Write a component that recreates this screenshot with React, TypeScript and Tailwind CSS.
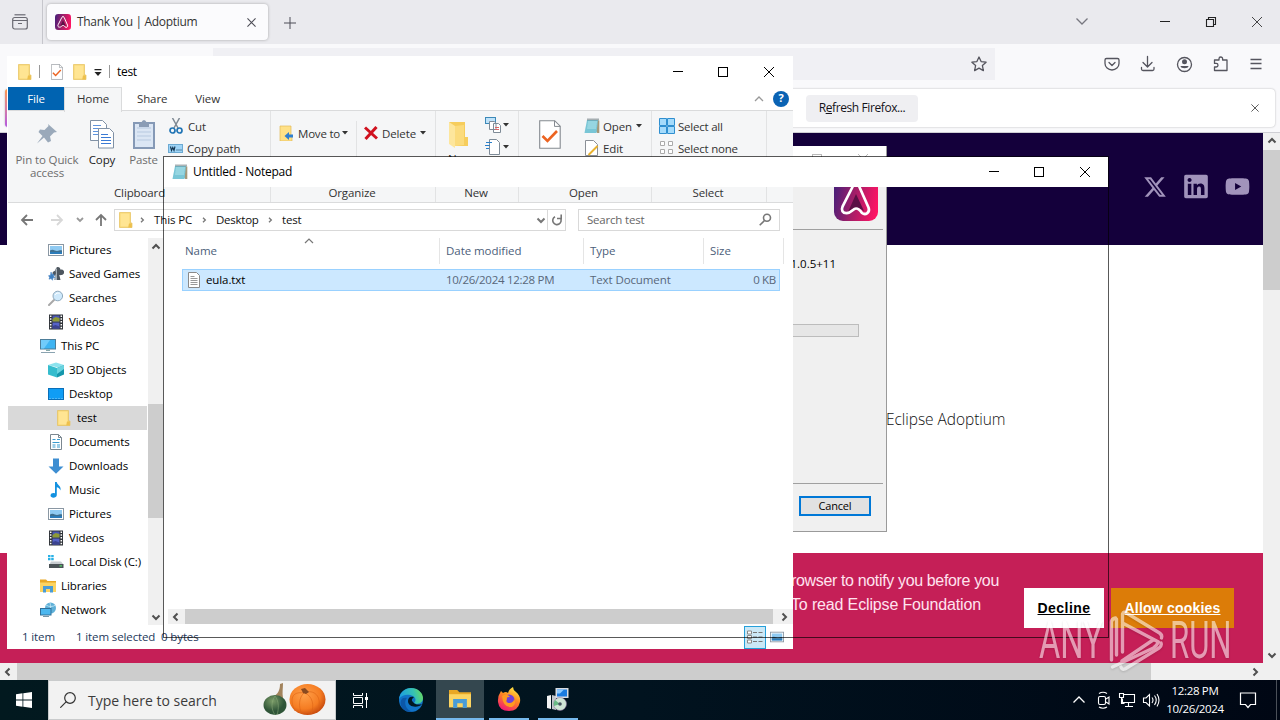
import React from "react";
import { FaLinkedin, FaYoutube } from "react-icons/fa";
import { FaXTwitter } from "react-icons/fa6";

type IconProps = { className?: string };

function FolderIcon({ className = "w-4 h-4" }: IconProps) {
  return (
    <svg viewBox="0 0 16 16" className={className}>
      <path d="M1.500 .5h11v10.500h1.500v4.500h-12.500z" fill="#f8d775" />
      <path d="M2.500 1.500h9v13h-9z" fill="#ffe593" />
      <path d="M11 11.500h2.800v4h-3.600z" fill="#eec04b" />
      <path d="M1.500 .5h11v10.500h1.500v4.500h-12.500z" fill="none" stroke="#e6c15c" strokeWidth=".7" />
    </svg>
  );
}

function PicturesIcon({ className = "w-4 h-4 shrink-0" }: IconProps) {
  return (
    <svg viewBox="0 0 16 16" className={className}>
      <rect x=".5" y="2.500" width="15" height="11" fill="#fff" stroke="#8a97a3" />
      <rect x="2" y="4" width="12" height="8" fill="#8fcaf2" />
      <path d="M2 8.500c3-2 5 .5 7 .5s3-1 5-.5v1.500h-12z" fill="#3f6f8f" />
      <path d="M2 10h12v2h-12z" fill="#2b7bb9" />
    </svg>
  );
}

function GamesIcon() {
  return (
    <svg viewBox="0 0 16 16" className="w-4 h-4 shrink-0">
      <path d="M9.500 1a2.600 2.600 0 0 1 2.800 2.600a2.800 2.800 0 1 1 1 5.400c-1 .3-1.500 0-2 0l1.200 5h-6l1-4.500c-3 1-4.500-3.500-1-4.500c1 0 1.200-4 3-4z" fill="#4d565f" />
      <path d="M9 2c-2 1-1.500 3-1 5l-2 7h3z" fill="#a7b1b9" />
      <path d="M3 6l1 2.500 2-.5-.5 2 1.500 1.500-2 .3-.5 2.500-1.500-1.800-2 .7.600-2-1.100-1.500 2-.5z" fill="#3f7fc0" stroke="#3f7fc0" strokeWidth=".5" />
    </svg>
  );
}

function SearchesIcon() {
  return (
    <svg viewBox="0 0 16 16" className="w-4 h-4 shrink-0">
      <path d="M6 10l-5 5" stroke="#a8a8a8" strokeWidth="2" strokeLinecap="round" />
      <circle cx="9.800" cy="6" r="4.800" fill="#cfe9fb" stroke="#8fa9bd" />
      <path d="M7 5c1-2 3-2.500 4.500-1.500" stroke="#fff" fill="none" />
    </svg>
  );
}

function VideosIcon() {
  return (
    <svg viewBox="0 0 16 16" className="w-4 h-4 shrink-0">
      <rect x="1" y=".5" width="14" height="15" fill="#2f3338" />
      <rect x="4.500" y="1.500" width="7" height="6" fill="#4a57b5" />
      <path d="M4.500 5l3-2 4 1v3.500h-7z" fill="#8e9a35" />
      <rect x="4.500" y="8.500" width="7" height="6" fill="#5662c8" />
      <path d="M4.500 12l3-1 4 1.500v2h-7z" fill="#3b4390" />
      <path d="M2.700 1.500v14M13.300 1.500v14" stroke="#fff" strokeWidth="1.500" strokeDasharray="1.500 1.300" />
    </svg>
  );
}

function PcIcon() {
  return (
    <svg viewBox="0 0 16 16" className="w-4 h-4 shrink-0">
      <rect x=".5" y="1.500" width="15" height="9.500" fill="#3fb4f2" stroke="#4d7d99" />
      <path d="M1 2h9l-6 8.500h-3z" fill="#71cbfa" />
      <path d="M6 11.500h4v1.500h-4z" fill="#8aa" />
      <path d="M1 14.500h14" stroke="#8aa3b0" />
    </svg>
  );
}

function CubeIcon() {
  return (
    <svg viewBox="0 0 16 16" className="w-4 h-4 shrink-0">
      <path d="M0 3l8-2.500 8 2.500-6 2.500z" fill="#8ce3ee" />
      <path d="M0 3l9 3v9.500l-9-3z" fill="#35bccd" />
      <path d="M9 6l7-3v9.500l-7 3z" fill="#1597ac" />
      <path d="M9 6l7-3v4l-7 5z" fill="#69d3df" />
    </svg>
  );
}

function DesktopIcon() {
  return (
    <svg viewBox="0 0 16 16" className="w-4 h-4 shrink-0">
      <rect x=".5" y="2.500" width="15" height="11" fill="#0f9df5" stroke="#0a6fb8" />
      <path d="M1 12.500h14" stroke="#5fbdf5" strokeWidth=".8" strokeDasharray="2 1" />
    </svg>
  );
}

function DocumentsIcon() {
  return (
    <svg viewBox="0 0 16 16" className="w-4 h-4 shrink-0">
      <path d="M2.500 .5h8l3 3v12h-11z" fill="#fff" stroke="#7b8790" />
      <path d="M10.500 .5v3h3" fill="none" stroke="#7b8790" />
      <path d="M4.500 5.500h3M4.500 8.500h7M4.500 11h3M4.500 13h3M9 5.500h3M9 11h3M9 13h3" stroke="#3a9bcf" />
    </svg>
  );
}

function DownloadsIcon() {
  return (
    <svg viewBox="0 0 16 16" className="w-4 h-4 shrink-0">
      <path d="M5 .5h6v8h4.500l-7.500 7.200-7.500-7.200h4.500z" fill="#3d8ed2" />
    </svg>
  );
}

function MusicIcon() {
  return (
    <svg viewBox="0 0 16 16" className="w-4 h-4 shrink-0">
      <path d="M7 0h1.800c.2 3 5 4 3.500 8.500-.3-2-2-3-3.500-3.300v7.800c0 3.500-6.300 3.600-6.300.6 0-2.400 3-3 4.500-2.200z" fill="#1391e0" />
    </svg>
  );
}

function DiskIcon() {
  return (
    <svg viewBox="0 0 16 16" className="w-4 h-4 shrink-0">
      <path d="M0 1h2.500v2.200h-2.500zM3.200 1h2.500v2.200h-2.500zM0 4h2.500v2.200h-2.500zM3.200 4h2.500v2.200h-2.500z" fill="#29b1e6" />
      <path d="M3 7.500h10l2.500 3h-14z" fill="#c8cdd1" />
      <rect x="1" y="10" width="14.500" height="4" fill="#4b5357" />
      <rect x="11.500" y="11.300" width="2.500" height="1.200" fill="#5be06c" />
    </svg>
  );
}

function LibrariesIcon({ className = "w-4 h-4 shrink-0" }: IconProps) {
  return (
    <svg viewBox="0 0 16 16" className={className}>
      <path d="M0 1.500h6l1.500 1.500h8.500v11h-16z" fill="#e9a825" />
      <path d="M0 4.500h16v9.500h-16z" fill="#fcd462" />
      <path d="M3 14.500v-6.500h10v6.500h-3v-3.500h-4v3.500z" fill="#4a9cd6" />
    </svg>
  );
}

function NetworkIcon() {
  return (
    <svg viewBox="0 0 16 16" className="w-4 h-4 shrink-0">
      <circle cx="10.500" cy="6" r="5.500" fill="#5fb0d8" />
      <path d="M6 3c3 2 7 2 9.500 0M8 11c3-3 3-7 2-10" stroke="#d7f0fb" strokeWidth=".7" fill="none" />
      <rect x=".5" y="6.500" width="10.500" height="6.500" fill="#4cb7ef" stroke="#30709a" />
      <path d="M3 14.500h6" stroke="#7897a8" />
    </svg>
  );
}

function NotepadIcon({ className = "w-4 h-4" }: IconProps) {
  return (
    <svg viewBox="0 0 16 16" className={className}>
      <path d="M3 2.500h12.300v12.500h-2z" fill="#a69879" />
      <path d="M3 2h11l-1.500 13h-12z" fill="#79c6d6" />
      <path d="M4 4h9M3.700 6h9M3.400 8h9M3.100 10h9" stroke="#c3edf3" strokeWidth=".8" />
      <path d="M3.500 1.500h11" stroke="#56666b" strokeWidth="2" strokeDasharray="1 1" />
    </svg>
  );
}

function CheckDocIcon({ className }: IconProps) {
  return (
    <svg viewBox="0 0 22 29" className={className}>
      <path d="M.7 .7h15l5.500 5.500v22h-20.500z" fill="#fff" stroke="#858a90" strokeWidth="1.100" />
      <path d="M15.500 .7v5.700h5.700" fill="none" stroke="#858a90" />
      <path d="M3.500 16l5 5 9.500-10" fill="none" stroke="#ec6421" strokeWidth="2.600" />
    </svg>
  );
}

function AdoptiumLogo({ className, id }: IconProps & { id: string }) {
  return (
    <svg viewBox="0 0 44 44" className={className}>
      <defs>
        <linearGradient id={id} x1="0" y1=".4" x2="1" y2=".6">
          <stop offset="0" stopColor="#4d1f78" />
          <stop offset=".45" stopColor="#a31e68" />
          <stop offset="1" stopColor="#ff1464" />
        </linearGradient>
      </defs>
      <rect width="44" height="44" rx="9" fill={`url(#${id})`} />
      <path d="M22 17l8 17-5-3h-5l-6 4z" fill="#5a1045" />
      <path
        d="M19 9q3-5 6 0l9.500 21.500c2 5-3 8-6.500 5.500-2-3-3.500-4.500-6-4.500-3 0-5 5-9.500 4.700-4 0-5.500-3-4-6.500z"
        fill="none"
        stroke="#fff"
        strokeWidth="2.700"
        strokeLinejoin="round"
      />
    </svg>
  );
}

function Caret({ className = "" }: IconProps) {
  return (
    <svg viewBox="0 0 6 4" className={`w-[6px] h-[4px] shrink-0 ${className}`}>
      <path d="M0 0h6l-3 3.500z" fill="#333" />
    </svg>
  );
}

function Chevron({ dir, className = "" }: { dir: "up" | "down" | "left" | "right"; className?: string }) {
  const paths = {
    up: "M2.500 7.500l3.500-3.500 3.500 3.500",
    down: "M2.500 4.500l3.500 3.500 3.500-3.500",
    left: "M7.500 2.500l-3.500 3.500 3.500 3.500",
    right: "M4.500 2.500l3.500 3.500-3.500 3.500",
  };
  return (
    <svg viewBox="0 0 12 12" className={`w-3 h-3 shrink-0 ${className}`}>
      <path d={paths[dir]} fill="none" stroke="currentColor" strokeWidth="2" />
    </svg>
  );
}

function WindowControls({ className = "" }: IconProps) {
  return (
    <svg viewBox="0 0 138 30" className={`w-[138px] h-[30px] ${className}`} fill="none" stroke="currentColor" shapeRendering="crispEdges">
      <path d="M18 14.500h10" />
      <rect x="63.500" y="10.500" width="9" height="9" />
      <path d="M109 10l10 10M119 10l-10 10" shapeRendering="auto" />
    </svg>
  );
}

function BrowserChrome() {
  return (
    <>
      <div className="flex h-[44px] shrink-0 bg-[#eaeaee] text-[#4c4c56]">
        <div className="flex w-[43px] items-center justify-center border-r border-[#c6c6cc]">
          <svg viewBox="0 0 16 16" className="w-4 h-4 -ml-[3px]" fill="none" stroke="#6a6a72" strokeWidth="1.200">
            <path d="M2.500 .8h11" />
            <rect x=".7" y="3.500" width="14.600" height="11.500" rx="2" />
            <path d="M1 6.500h14M6 9.500h4" />
          </svg>
        </div>
        <div className="ml-[4px] mt-[4px] flex h-[36px] w-[221px] items-center rounded bg-[#fbfbfd] shadow-[0_0_3px_rgba(0,0,0,0.3)]">
          <AdoptiumLogo id="fav" className="ml-2 w-4 h-4" />
          <span className="ml-[6px] flex-1 text-[12px] tracking-[-0.330px] text-[#333]">Thank You | Adoptium</span>
          <svg viewBox="0 0 10 10" className="mr-[12px] w-[9px] h-[9px]" stroke="currentColor" strokeWidth="1.200">
            <path d="M.5 .5l9 9M9.500 .5l-9 9" />
          </svg>
        </div>
        <svg viewBox="0 0 12 12" className="ml-[16px] mt-[17px] w-3 h-3" stroke="currentColor">
          <path d="M6 0v12M0 6h12" />
        </svg>
        <svg viewBox="0 0 204 44" className="ml-auto w-[204px] h-[44px]" fill="none" stroke="currentColor" strokeWidth="1.100">
          <path d="M.5 18.500l5.500 5.500 5.500-5.500" stroke="#77777f" strokeWidth="1.300" />
          <path d="M84 21.500h10" stroke="#222" strokeWidth="1" />
          <path d="M130.500 19.500h7v7h-7zM132.500 19v-1.500h7v7h-1.500" stroke="#222" />
          <path d="M176 17l10 10M186 17l-10 10" stroke="#333" strokeWidth=".9" />
        </svg>
      </div>
      <div className="flex h-[44px] shrink-0 bg-[#f9f9fb] text-[#55555e]">
        <div className="ml-[213px] mt-[4px] flex h-[32px] w-[782px] items-center justify-end bg-[#f0f0f4]">
          <svg viewBox="0 0 16 16" className="mr-2 w-4 h-4" fill="none" stroke="currentColor" strokeWidth="1.300" strokeLinejoin="round">
            <path d="M8 1l2.100 4.600 5 .6-3.700 3.400 1 5-4.400-2.500-4.400 2.500 1-5-3.700-3.400 5-.6z" />
          </svg>
        </div>
        <svg viewBox="0 0 176 44" className="ml-auto w-[176px] h-[44px]" fill="none" stroke="currentColor" strokeWidth="1.300" strokeLinecap="round" strokeLinejoin="round">
          <path d="M2.500 14.500h11q1.500 0 1.500 1.500v3.500a7 6.500 0 0 1-14 0v-3.500q0-1.500 1.500-1.500zM5 18.500l3 3 3-3" />
          <path d="M43.500 12.500v10M39 18.500l4.500 4.500 4.500-4.500M37.500 23.500v1.500q0 1.500 1.500 1.500h9.500q1.500 0 1.500-1.500v-1.500" />
          <circle cx="80.500" cy="20.500" r="7" />
          <circle cx="80.500" cy="17.800" r="2.500" fill="currentColor" stroke="none" />
          <path d="M76.500 22h8c0 3-8 3-8 0z" fill="currentColor" stroke="none" />
          <path d="M110.500 17.500v-1.500h4.500v-1.200a1.800 1.800 0 0 1 3.600 0v1.200h4.400v10.500h-12.500v-3.500h1.700a1.800 1.800 0 0 0 0-3.600h-1.700z" />
          <path d="M146.500 15.500h11M146.500 19.500h11M146.500 24.500h11" strokeLinecap="butt" />
        </svg>
      </div>
      <div className="flex h-[45px] shrink-0 border-b border-[#cfcfd4] bg-[#f9f9fb]">
        <div className="ml-[5px] flex h-[38px] w-[1270px] items-center rounded-[4px] bg-white shadow-[0_0_2px_rgba(0,0,0,0.3)] mt-px">
          <div className="h-full w-[3px] rounded-l bg-linear-to-b from-[#ff9640] to-[#b455e0]" />
          <div className="ml-[798px] flex h-[27px] w-[112px] items-center justify-center rounded-[4px] bg-[#efeff2] text-[12px] tracking-[-0.400px] text-[#15141a]">
            <span>R<span className="underline">e</span>fresh Firefox...</span>
          </div>
          <svg viewBox="0 0 10 10" className="ml-auto mr-[16px] w-[8px] h-[8px]" stroke="#333">
            <path d="M.5 .5l9 9M9.500 .5l-9 9" />
          </svg>
        </div>
      </div>
    </>
  );
}

function BrowserPage() {
  return (
    <>
      <div className="flex h-[530px]">
        <div className="flex w-[1263px] flex-col bg-white">
          <div className="flex h-[112px] items-start justify-end bg-[#14003b] text-[#a193bb]">
            <FaXTwitter className="mt-[42px] mr-[17px] w-[24px] h-[24px]" />
            <FaLinkedin className="mt-[40px] mr-[17px] w-[24px] h-[27px]" />
            <FaYoutube className="mt-[41px] mr-[13px] w-[25px] h-[25px]" />
          </div>
          <div className="flex h-[308px] items-start">
            <span className="ml-[886px] mt-[162px] text-[15.500px] font-light leading-6 tracking-[-0.050px] text-[#111]">Eclipse Adoptium</span>
          </div>
          <div className="flex h-[110px] bg-[#c51f57]">
            <p className="ml-[791px] mt-[16px] w-[233px] whitespace-nowrap font-['Liberation_Sans',sans-serif] text-[16px] leading-6 text-[#ffe3ef]">
              <span className="tracking-[-0.350px]">rowser to notify you before you</span>
              <br />
              <span className="tracking-[-0.150px]">To read Eclipse Foundation</span>
            </p>
            <div className="mt-[35px] flex h-[40px] w-[80px] items-center justify-center bg-white font-['Liberation_Sans',sans-serif] text-[14px] font-bold tracking-[0.450px] text-black underline">
              Decline
            </div>
            <div className="ml-[7px] mt-[35px] flex h-[40px] w-[123px] items-center justify-center bg-[#dc7c08] font-['Liberation_Sans',sans-serif] text-[14px] font-bold tracking-[0.200px] text-white underline">
              Allow cookies
            </div>
          </div>
        </div>
        <div className="flex w-[17px] flex-col items-center bg-[#f0f0f0] text-[#505050]">
          <Chevron dir="up" className="mt-[2px] mb-[3px]" />
          <div className="h-[140px] w-full bg-[#cdcdcd]" />
          <Chevron dir="down" className="mt-auto mb-[2px]" />
        </div>
      </div>
      <div className="flex h-[17px] items-center bg-[#f0f0f0] text-[#505050]">
        <Chevron dir="left" className="ml-[2px] mr-[3px]" />
        <div className="h-full w-[1134px] bg-[#cdcdcd]" />
        <Chevron dir="right" className="ml-auto mr-[19px]" />
      </div>
    </>
  );
}

function InstallerWindow() {
  return (
    <div className="absolute left-[390px] top-[146px] flex h-[386px] w-[497px] flex-col border-r border-b border-[#9a9a9a] bg-[#f0f0f0]">
      <div className="flex h-[30px] shrink-0 justify-end bg-white text-[#bbb]">
        <WindowControls className="-mr-px -mt-[2px]" />
      </div>
      <div className="mr-[3px] flex h-[54px] shrink-0 items-start justify-end border-b border-[#a0a0a0]">
        <AdoptiumLogo id="installer" className="mr-[5px] mt-[1px] h-[44px] w-[44px]" />
      </div>
      <span className="mr-[50px] mt-[26px] text-right text-[11.500px] leading-4 text-black">1.0.5+11</span>
      <div className="ml-[20px] mt-[52px] h-[13px] w-[449px] shrink-0 border border-[#bcbcbc] bg-[#e6e6e6]" />
      <div className="mr-[3px] mt-[146px] border-t border-[#a0a0a0]" />
      <div className="mr-[15px] mt-[12px] flex h-[20px] w-[72px] items-center justify-center self-end border-2 border-[#0078d7] bg-[#e1e1e1] text-[11px] tracking-[-0.200px] text-black">
        Cancel
      </div>
    </div>
  );
}

function Ribbon() {
  return (
    <div className="flex h-[93px] shrink-0 border-y border-[#dadbdc] bg-[#f5f6f7] text-[11.500px] leading-[13px] tracking-[-0.120px] text-[#333]">
      <div className="flex w-[263px] flex-col border-r border-[#e2e3e4]">
        <div className="flex h-[74px]">
          <div className="flex w-[78px] flex-col items-center pt-[11px] text-[#6d6d6d]">
            <svg viewBox="0 0 24 24" className="w-6 h-6">
              <path d="M13 2l9 8-3 .5-4 4 1 4.500-3 1.500-4-5-7 6 5.500-7.500-4-4 1.500-2.500 4.500 .5 4-4z" fill="#9aa9ba" />
            </svg>
            <span className="mt-[7px] whitespace-nowrap text-center">Pin to Quick<br />access</span>
          </div>
          <div className="flex w-[32px] flex-col items-center pt-[9px] text-[#222]">
            <svg viewBox="0 0 26 29" className="h-[29px] w-[26px]" fill="#fff" stroke="#8091a5">
              <path d="M1.500 .5h12l4 4v16h-16z" />
              <path d="M4 5.500h8M4 8.500h10M4 11.500h10M4 14.500h10" stroke="#5e93dd" />
              <path d="M9.500 8.500h11l4 4v15.500h-15z" />
              <path d="M12 14.500h7M12 17.500h10M12 20.500h10M12 23.500h10" stroke="#3a7ad4" />
            </svg>
            <span className="mt-[4px]">Copy</span>
          </div>
          <div className="flex w-[51px] flex-col items-center pt-[8px] text-[#6d6d6d]">
            <svg viewBox="0 0 22 30" className="h-[30px] w-[22px]">
              <rect x="1" y="4" width="20" height="25" fill="#dbe6f4" stroke="#8599b6" strokeWidth="2" />
              <path d="M4 9h14M4 13h14M4 17h14M4 21h14" stroke="#b7c9e0" />
              <path d="M6 4h2q3-6 6 0h2v4h-10z" fill="#8a9cb5" />
            </svg>
            <span className="mt-[4px]">Paste</span>
          </div>
          <div className="flex flex-col pt-[4px]">
            <span className="flex h-[22px] items-center gap-[5px]">
              <svg viewBox="0 0 14 16" className="h-4 w-[14px]" fill="none">
                <path d="M3.500 0l5.500 10M10.500 0l-5.500 10" stroke="#7e8993" strokeWidth="1.500" />
                <circle cx="3.500" cy="12.500" r="2.500" stroke="#2175b5" strokeWidth="1.700" />
                <circle cx="10.500" cy="12.500" r="2.500" stroke="#2175b5" strokeWidth="1.700" />
              </svg>
              Cut
            </span>
            <span className="-ml-px flex h-[22px] items-center gap-[4px]">
              <svg viewBox="0 0 15 9" className="h-[9px] w-[15px]">
                <rect x=".5" y=".5" width="14" height="8" fill="#9ed4f7" stroke="#6caad2" />
                <path d="M2.500 2.500l1 4 1.300-3 1.200 3 1-4M8.500 6h1M10.500 6h1M12.500 6h1" fill="none" stroke="#12344f" strokeWidth="1.100" />
              </svg>
              Copy path
            </span>
          </div>
        </div>
        <span className="mt-[1px] ml-[106px]">Clipboard</span>
      </div>
      <div className="flex w-[165px] flex-col items-center border-r border-[#e2e3e4]">
        <div className="flex h-[74px] w-full pl-[8px] pt-[10px]">
          <span className="flex h-[24px] w-[77px] items-center gap-[3px] whitespace-nowrap">
            <svg viewBox="0 0 16 16" className="h-4 w-4 shrink-0">
              <path d="M1 1h11v10h1v5h-12z" fill="#ffe187" stroke="#e2ba57" strokeWidth=".7" />
              <path d="M5.500 11l4.500-4v2.500h4v3h-4v2.500z" fill="#2f7fd0" />
            </svg>
            <span className="-mr-px tracking-[-0.200px]">Move to</span>
            <Caret />
          </span>
          <div className="h-[37px] w-px bg-[#e2e3e4]" />
          <span className="ml-[7px] flex h-[24px] items-center gap-[4px]">
            <svg viewBox="0 0 14 14" className="h-[14px] w-[14px]" stroke="#d0121f" strokeWidth="3">
              <path d="M1 1.500l12 11M12.500 1l-11 12" />
            </svg>
            Delete
            <Caret />
          </span>
        </div>
        <span className="-ml-[2px] mt-[1px]">Organize</span>
      </div>
      <div className="flex w-[83px] flex-col items-center border-r border-[#e2e3e4]">
        <div className="flex h-[74px] w-full pl-[12px] pt-[6px]">
          <div className="flex w-[37px] flex-col">
            <svg viewBox="0 0 22 28" className="mt-[4px] h-[28px] w-[22px]">
              <path d="M1 1h16v15h3v9h-14z" fill="#f6cd5d" />
              <path d="M1 1l6 4v22l-6-4z" fill="#fde69d" />
              <path d="M7 5v20l9-1v-20z" fill="#fbdb7d" />
            </svg>
            <span className="mt-[3px]">New</span>
          </div>
          <div className="flex flex-col gap-[6px]">
            <span className="flex items-center gap-[2px]">
              <svg viewBox="0 0 16 16" className="h-4 w-4" fill="#fff" stroke="#7e8b97">
                <rect x=".5" y=".5" width="10" height="6" fill="#bfe3fa" stroke="#3d89b8" />
                <path d="M4.500 4.500h5l1.500 2v6h-6.500zM8.500 6.500h5l2 2v7h-7z" />
                <path d="M10 10.500h4M10 12.500h4" stroke="#d66" />
              </svg>
              <Caret />
            </span>
            <span className="flex items-center gap-[2px]">
              <svg viewBox="0 0 16 16" className="h-4 w-4" fill="#fff" stroke="#7e8b97">
                <path d="M4.500 .5h7l3 3v12h-10z" />
                <path d="M1 3.500h6M0 6.500h5M1 9.500h3" stroke="#2a7fc9" />
              </svg>
              <Caret />
            </span>
          </div>
        </div>
        <span className="-ml-[2px] mt-[1px]">New</span>
      </div>
      <div className="flex w-[133px] flex-col items-center border-r border-[#e2e3e4]">
        <div className="flex h-[74px] w-full pl-[20px] pt-[4px]">
          <div className="flex w-[45px] flex-col">
            <CheckDocIcon className="mt-[5px] h-[29px] w-[22px]" />
            <span className="-ml-[13px] mt-[5px]">Properties</span>
          </div>
          <div className="flex flex-col">
            <span className="flex h-[22px] items-center gap-[3px]">
              <NotepadIcon className="h-4 w-4" />
              Open
              <Caret className="ml-px" />
            </span>
            <span className="flex h-[22px] items-center gap-[3px]">
              <svg viewBox="0 0 16 16" className="h-4 w-4" fill="#fff" stroke="#8a8f96">
                <path d="M1.500 .5h8l4 4v11h-12z" />
                <path d="M13.500 6l-9 9" stroke="#e9b22f" strokeWidth="2" />
              </svg>
              Edit
            </span>
          </div>
        </div>
        <span className="-ml-[3px] mt-[1px]">Open</span>
      </div>
      <div className="flex w-[115px] flex-col items-center border-r border-[#e2e3e4]">
        <div className="flex h-[74px] w-full flex-col pl-[7px] pt-[4px] tracking-[-0.220px]">
          <span className="flex h-[22px] items-center gap-[3px]">
            <svg viewBox="0 0 16 16" className="h-4 w-4" fill="#a5dbfb" stroke="#2f8fd0">
              <path d="M.5 .5h7v7h-7zM8.500 .5h7v7h-7zM.5 8.500h7v7h-7zM8.500 8.500h7v7h-7z" />
            </svg>
            Select all
          </span>
          <span className="flex h-[22px] items-center gap-[3px]">
            <svg viewBox="0 0 16 16" className="h-4 w-4" fill="#fff" stroke="#aaa">
              <path d="M1.500 1.500h4v4h-4zM9.500 1.500h4v4h-4zM1.500 9.500h4v4h-4zM9.500 9.500h4v4h-4z" />
            </svg>
            Select none
          </span>
        </div>
        <span className="-ml-[2px] mt-[1px]">Select</span>
      </div>
    </div>
  );
}

function AddressRow() {
  return (
    <div className="flex h-[33px] shrink-0 items-center text-[12px] text-[#111]">
      <svg viewBox="0 0 106 33" className="h-[33px] w-[106px]" fill="none" strokeWidth="1.800">
        <path d="M25 17h-11M19 12l-5 5 5 5" stroke="#777" />
        <path d="M43 17h11M49 12l5 5-5 5" stroke="#d8d8d8" />
        <path d="M69 15l3 3 3-3" stroke="#999" />
        <path d="M93 23v-11M88 17l5-5 5 5" stroke="#777" />
      </svg>
      <div className="flex h-[22px] w-[452px] items-center border border-[#d9d9d9]">
        <FolderIcon className="ml-[3px] h-4 w-4" />
        <Chevron dir="right" className="ml-[4px] w-[8px] text-[#777]" />
        <span className="ml-[8px] w-[43px] text-[11.500px] tracking-[-0.100px] whitespace-nowrap">This PC</span>
        <Chevron dir="right" className="ml-[3px] w-[8px] text-[#777]" />
        <span className="ml-[8px] w-[44px] text-[11.500px] tracking-[-0.250px]">Desktop</span>
        <Chevron dir="right" className="ml-[6px] w-[8px] text-[#777]" />
        <span className="ml-[8px] text-[11.500px] tracking-[-0.200px]">test</span>
        <Chevron dir="down" className="ml-auto text-[#777]" />
        <div className="flex h-[20px] w-[18px] items-center justify-center border-l border-[#d9d9d9]">
          <svg viewBox="0 0 12 12" className="h-3 w-3" fill="none" stroke="#777" strokeWidth="1.600">
            <path d="M9.500 4.200a4.200 4.200 0 1 1-5.500-1.500M6 4.500h4.200v-4" />
          </svg>
        </div>
      </div>
      <div className="ml-[12px] flex h-[22px] w-[202px] items-center justify-between border border-[#d9d9d9] pl-[8px] pr-[7px] text-[11.500px] tracking-[-0.200px] text-[#666]">
        Search test
        <svg viewBox="0 0 13 13" className="h-[13px] w-[13px]" fill="none" stroke="#777" strokeWidth="1.600">
          <circle cx="8" cy="4.800" r="3.500" />
          <path d="M5.500 7.500l-4.800 4.800" />
        </svg>
      </div>
    </div>
  );
}

const treeItems = [
  { label: "Pictures", icon: <PicturesIcon />, pad: "pl-[40px]" },
  { label: "Saved Games", icon: <GamesIcon />, pad: "pl-[40px]" },
  { label: "Searches", icon: <SearchesIcon />, pad: "pl-[40px]" },
  { label: "Videos", icon: <VideosIcon />, pad: "pl-[40px]" },
  { label: "This PC", icon: <PcIcon />, pad: "pl-[32px]" },
  { label: "3D Objects", icon: <CubeIcon />, pad: "pl-[40px]" },
  { label: "Desktop", icon: <DesktopIcon />, pad: "pl-[40px]" },
  { label: "test", icon: <FolderIcon className="h-4 w-4" />, pad: "pl-[48px] bg-[#d9d9d9]" },
  { label: "Documents", icon: <DocumentsIcon />, pad: "pl-[40px]" },
  { label: "Downloads", icon: <DownloadsIcon />, pad: "pl-[40px]" },
  { label: "Music", icon: <MusicIcon />, pad: "pl-[40px]" },
  { label: "Pictures", icon: <PicturesIcon />, pad: "pl-[40px]" },
  { label: "Videos", icon: <VideosIcon />, pad: "pl-[40px]" },
  { label: "Local Disk (C:)", icon: <DiskIcon />, pad: "pl-[40px]" },
  { label: "Libraries", icon: <LibrariesIcon />, pad: "pl-[32px]" },
  { label: "Network", icon: <NetworkIcon />, pad: "pl-[32px]" },
];

function ExplorerWindow() {
  return (
    <div className="absolute left-[7px] top-[56px] flex h-[593px] w-[786px] flex-col bg-white pl-px">
      <div className="flex h-[31px] shrink-0 items-center">
        <FolderIcon className="ml-[9px] h-4 w-4" />
        <div className="ml-[6px] h-[13px] w-px bg-[#999]" />
        <CheckDocIcon className="ml-[11px] h-[16px] w-[12px]" />
        <FolderIcon className="ml-[9px] h-4 w-4" />
        <svg viewBox="0 0 8 8" className="ml-[6px] mt-[3px] h-[8px] w-[8px]" fill="#222">
          <path d="M.5 0h7v1.200h-7zM.5 3h7l-3.500 4z" />
        </svg>
        <div className="ml-[7px] h-[13px] w-px bg-[#999]" />
        <span className="ml-[7px] text-[12px] tracking-[-0.300px] text-black">test</span>
        <WindowControls className="ml-auto" />
      </div>
      <div className="flex h-[23px] shrink-0 items-center text-[11.500px] tracking-[-0.120px] text-[#333]">
        <div className="flex h-full w-[56px] items-center justify-center bg-[#0063b1] text-white">File</div>
        <div className="relative z-10 -mb-[2px] flex h-[25px] w-[58px] items-center justify-center border border-b-0 border-[#dadbdc] bg-[#f5f6f7] pb-[3px]">Home</div>
        <span className="ml-[15px]">Share</span>
        <span className="ml-[28px]">View</span>
        <svg viewBox="0 0 10 6" className="ml-auto h-[6px] w-[10px]" fill="none" stroke="#999" strokeWidth="1.300">
          <path d="M1 5l4-4 4 4" />
        </svg>
        <div className="ml-[9px] mr-[4px] flex h-4 w-4 items-center justify-center rounded-full bg-[#0a63b4] text-[11px] font-bold text-white">?</div>
      </div>
      <Ribbon />
      <AddressRow />
      <div className="flex h-[389px] shrink-0">
        <div className="flex w-[140px] flex-col pt-[2px] pr-px">
          {treeItems.map((item, i) => (
            <div key={i} className={`flex h-[24px] shrink-0 items-center gap-[5px] whitespace-nowrap text-[11.500px] tracking-[-0.100px] text-black ${item.pad}`}>
              {item.icon}
              {item.label}
            </div>
          ))}
        </div>
        <div className="mt-[2px] flex w-[15px] flex-col items-center bg-[#f0f0f0] text-[#505050]">
          <Chevron dir="up" className="mt-[3px]" />
          <div className="mt-[151px] h-[114px] w-full bg-[#cdcdcd]" />
          <Chevron dir="down" className="mt-auto mb-[2px]" />
        </div>
        <div className="flex flex-1 flex-col pl-[5px]">
          <svg viewBox="0 0 10 6" className="ml-[136px] mt-[2px] h-[6px] w-[10px] shrink-0" fill="none" stroke="#777" strokeWidth="1.200">
            <path d="M1 5l4-4 4 4" />
          </svg>
          <div className="-mt-[6px] flex h-[26px] shrink-0 items-center text-[11.500px] tracking-[-0.050px] text-[#4c607a]">
            <span className="w-[272px] border-r border-[#e5e5e5] pl-[17px] leading-[26px]">Name</span>
            <span className="w-[144px] border-r border-[#e5e5e5] pl-[6px] leading-[26px]">Date modified</span>
            <span className="w-[120px] border-r border-[#e5e5e5] pl-[6px] leading-[26px]">Type</span>
            <span className="w-[80px] border-r border-[#e5e5e5] pl-[6px] leading-[26px]">Size</span>
          </div>
          <div className="ml-[14px] mt-[5px] flex h-[22px] w-[598px] shrink-0 items-center border border-[#99d1ff] bg-[#cce8ff] text-[11.500px] tracking-[-0.100px] text-[#58677a]">
            <svg viewBox="0 0 12 16" className="ml-[5px] h-4 w-3" fill="#fff" stroke="#8a8a8a">
              <path d="M.5 .5h8l3 3v12h-11z" />
              <path d="M2.500 4.500h4M2.500 6.500h7M2.500 8.500h7M2.500 10.500h7M2.500 12.500h7" stroke="#999" />
            </svg>
            <span className="ml-[6px] w-[240px] text-black">eula.txt</span>
            <span className="w-[144px] tracking-[-0.280px]">10/26/2024 12:28 PM</span>
            <span className="w-[120px]">Text Document</span>
            <span className="ml-auto mr-[3px] tracking-[-0.300px]">0 KB</span>
          </div>
          <div className="mt-auto mb-px flex h-[15px] items-center bg-[#f0f0f0] text-[#505050]">
            <Chevron dir="left" className="ml-[2px] mr-[3px]" />
            <div className="h-full w-[588px] bg-[#cdcdcd]" />
            <Chevron dir="right" className="ml-auto mr-[3px]" />
          </div>
        </div>
      </div>
      <div className="flex h-[24px] shrink-0 items-center text-[11.500px] tracking-[-0.120px] text-[#1e395b]">
        <span className="ml-[14px] w-[54px]">1 item</span>
        <span className="w-[85px] whitespace-nowrap">1 item selected</span>
        <span>0 bytes</span>
        <div className="ml-auto flex h-[23px] w-[22px] items-center justify-center border border-[#26a0da] bg-[#cbe8f6]">
          <svg viewBox="0 0 16 14" className="h-[14px] w-4" fill="#fff" stroke="#888">
            <path d="M.5 1h4v3h-4zM.5 5.500h4v3h-4zM.5 10h4v3h-4z" />
            <path d="M6 2.500h4M11.500 2.500h4M6 7h4M11.500 7h4M6 11.500h4M11.500 11.500h4" stroke="#777" />
          </svg>
        </div>
        <PicturesIcon className="ml-[4px] mr-[9px] h-[14px] w-[14px]" />
      </div>
    </div>
  );
}

function NotepadWindow() {
  return (
    <div className="absolute left-[163px] top-[156px] h-[482px] w-[946px] border border-black/65">
      <div className="flex h-[30px] items-center bg-white">
        <NotepadIcon className="ml-[8px] h-4 w-4" />
        <span className="ml-[5px] text-[12px] tracking-[-0.250px] text-black">Untitled - Notepad</span>
        <WindowControls className="ml-auto -mr-px" />
      </div>
    </div>
  );
}

function Watermark() {
  return (
    <div className="absolute left-[1039px] top-[610px] flex h-[62px] w-[194px] items-center text-white opacity-55 drop-shadow-[0_1px_1px_rgba(0,0,0,0.25)]">
      <div className="w-[66px]">
        <span className="inline-block origin-left scale-x-[0.64] font-['Roboto',sans-serif] text-[51px] leading-[62px]">ANY</span>
      </div>
      <svg viewBox="0 0 60 62" className="h-[62px] w-[60px] shrink-0" fill="none" stroke="currentColor" strokeWidth="3.400" strokeLinejoin="round" strokeLinecap="round">
        <path d="M6.500 50v-38q0-3 4-4M11.500 9v36" />
        <path d="M17.500 42v-38q1-3 4-1l33 20q3 2 2 5M17.500 13l36 19q-2 4-5 6l-41 19" />
        <path d="M17 51l31-21M56 33q1 3-2 5l-34 21q-3 1-4-2" />
      </svg>
      <div className="ml-[5px] w-[60px]">
        <span className="inline-block origin-left scale-x-[0.610] font-['Roboto',sans-serif] text-[51px] leading-[62px]">RUN</span>
      </div>
    </div>
  );
}

function Pumpkins() {
  return (
    <svg viewBox="0 0 64 36" className="h-9 w-16">
      <defs>
        <radialGradient id="gourd" cx=".4" cy=".3">
          <stop offset="0" stopColor="#7b9c68" />
          <stop offset="1" stopColor="#2f5438" />
        </radialGradient>
        <radialGradient id="pumpkin" cx=".4" cy=".35" r=".65">
          <stop offset="0" stopColor="#ffa04a" />
          <stop offset=".7" stopColor="#f57c22" />
          <stop offset="1" stopColor="#cc4f10" />
        </radialGradient>
      </defs>
      <path d="M10 15c5-3 7-7 7-13l3-1c0 5-1 10 0 15z" fill="#a2835c" />
      <ellipse cx="12" cy="23" rx="11.500" ry="10" fill="url(#gourd)" />
      <path d="M12 14c-4 6-4 13 0 19M12 14c4 5 4 13 2 19" stroke="#8fae7d" strokeWidth=".5" fill="none" />
      <ellipse cx="44.500" cy="17.500" rx="18" ry="15.500" fill="url(#pumpkin)" />
      <path d="M41 11c-12-2-15 6-9 18M41 11c-5 4-6 14-2 21M42 11c7 3 10 12 6 21M43 10c10-2 16 6 12 18" stroke="#dc6314" fill="none" strokeWidth=".6" />
      <path d="M38 7l4-1 4 4-3 2-3-1z" fill="#8a4a20" />
    </svg>
  );
}

function EdgeIcon() {
  return (
    <svg viewBox="0 0 24 24" className="h-6 w-6">
      <defs>
        <linearGradient id="edge" x1="0" x2="1" y1=".4" y2=".2">
          <stop offset="0" stopColor="#1b9de2" />
          <stop offset=".6" stopColor="#35c1b4" />
          <stop offset="1" stopColor="#6bdc59" />
        </linearGradient>
      </defs>
      <circle cx="12" cy="12" r="12" fill="#1173c8" />
      <path d="M0 11C1 4 6 0 12 0c7 0 12 5 12 10 0 6-7 7-9 5 1-1 1.500-2 1.500-3.500C16 7 5 4 0 11z" fill="url(#edge)" />
      <path d="M9 13c0-4 3-5 6-4-2 2-3 3-1 5 2 3 6 3 9 2-3 4-14 4-14-3z" fill="#021722" />
      <path d="M8 10c-4 4-1 13 6 13.500-8 2-14-5-12-11 1-3 4-3 6-2.500z" fill="#0c57a8" />
    </svg>
  );
}

function FirefoxIcon() {
  return (
    <svg viewBox="0 0 24 24" className="h-6 w-6">
      <defs>
        <linearGradient id="fox" x1=".8" x2=".3" y1="0" y2="1">
          <stop offset="0" stopColor="#fff04a" />
          <stop offset=".45" stopColor="#ff8a1f" />
          <stop offset="1" stopColor="#f21873" />
        </linearGradient>
      </defs>
      <path d="M4 4l2 2q3-2 5 0 1-4 5-6 0 3 3 5 5 4 4 10-2 9-11 9-10 0-11-9-.5-6 3-11z" fill="url(#fox)" />
      <circle cx="12" cy="13" r="5.500" fill="#7040d8" />
      <path d="M5 9q5-3 8 1-4 0-3 2-2 4 3 4 4-1 4-4 3 5-2 8-9 1-10-11z" fill="#ff9a20" />
    </svg>
  );
}

function InstallerIcon() {
  return (
    <svg viewBox="0 0 24 24" className="h-6 w-6">
      <path d="M1 9l4-1v14l-4-1z" fill="#f3f3f3" />
      <path d="M6 8l4 1v14l-4-1z" fill="#c4c8cc" />
      <rect x="9.500" y="1" width="13" height="10" fill="#d9dde3" />
      <rect x="11" y="2.500" width="10" height="7" fill="#1a7be0" />
      <path d="M11 2.500h7l-4 4h-3z" fill="#8bcaff" />
      <circle cx="14" cy="17" r="6.500" fill="#cfe5d5" stroke="#869" strokeWidth=".5" />
      <path d="M14 17l-5-4a6.500 6.500 0 0 0-1 6z" fill="#68b984" />
      <circle cx="14" cy="17" r="1.800" fill="#47535f" />
    </svg>
  );
}

function Taskbar() {
  return (
    <div className="flex h-[40px] shrink-0 bg-linear-to-r from-[#02191f] via-[#01131f] to-[#000714] text-white">
      <div className="flex w-[48px] items-center justify-center">
        <svg viewBox="0 0 16 16" className="h-4 w-4" fill="#fff">
          <path d="M0 2.200l6.500-.9v6.200h-6.500zM7.300 1.200l8.700-1.200v7.500h-8.700zM0 8.400h6.500v6.300l-6.500-.9zM7.300 8.400h8.700v7.600l-8.700-1.200z" />
        </svg>
      </div>
      <div className="flex w-[288px] items-center border border-[#c9cbcc] bg-[#f2f2f2] text-[#3b3b3b]">
        <svg viewBox="0 0 16 16" className="ml-[11px] h-4 w-4" fill="none" stroke="#333" strokeWidth="1.200">
          <circle cx="10" cy="6" r="5.300" />
          <path d="M6.300 9.700l-6 6" />
        </svg>
        <span className="ml-[12px] text-[14px]">Type here to search</span>
        <div className="ml-auto mr-[8px] mb-px"><Pumpkins /></div>
      </div>
      <div className="flex w-[48px] items-center justify-center">
        <svg viewBox="0 0 17 17" className="h-[17px] w-[17px]" fill="none" stroke="#fff">
          <path d="M1.500 1v2.500h9v-2.500M1.500 16v-2.500h9v2.500M1.500 5.500h9v6h-9zM14.500 1v4M14.500 8v8" />
          <rect x="13" y="5" width="3" height="3" fill="#fff" stroke="none" />
        </svg>
      </div>
      <div className="ml-[2px] mr-px flex w-[49px] items-center justify-center"><EdgeIcon /></div>
      <div className="flex w-[48px] items-center justify-center border-b-2 border-[#76b9ed] bg-[#34474f]">
        <LibrariesIcon className="h-[22px] w-[22px]" />
      </div>
      <div className="ml-[5px] flex w-[40px] items-center justify-center border-b-2 border-[#76b9ed]"><FirefoxIcon /></div>
      <div className="ml-[9px] flex w-[40px] items-center justify-center border-b-2 border-[#76b9ed]"><InstallerIcon /></div>
      <svg viewBox="0 0 90 40" className="ml-auto h-[40px] w-[90px]" fill="none" stroke="#fff" strokeWidth="1.100">
        <path d="M3.500 22.500l5.500-5.500 5.500 5.500" strokeWidth="1.300" />
        <rect x="28.500" y="16.500" width="7" height="8" rx="1.500" />
        <path d="M36 19l3-2v7l-3-2M29 13.500q4-2.500 8 0M29 27q4 2.500 8 0" />
        <path d="M53.500 14.500h11v8h-12v-4M58.500 23v3M55 26.500h8M49.500 13.500h4v4h-4zM51.500 17.500v6h3" />
        <path d="M73.500 18v4.500h2.500l3.500 3.500v-11.500l-3.500 3.500zM82 17.500q2 2.500 0 5.500M84.500 15.500q3.500 4.500 0 9.500M87 14q4 6 0 12.500" />
      </svg>
      <div className="ml-[3px] flex w-[64px] flex-col items-center justify-center text-[11.500px] leading-[18px] tracking-[-0.350px] whitespace-nowrap">
        <span>12:28 PM</span>
        <span>10/26/2024</span>
      </div>
      <svg viewBox="0 0 18 17" className="ml-[12px] mt-[12px] h-[17px] w-[18px]" fill="none" stroke="#fff" strokeWidth="1.200">
        <path d="M1.500 1h15v11.500h-5l-2.500 3-2.500-3h-5z" />
      </svg>
      <div className="ml-[19px] mr-[3px] w-px bg-[#4a5058]" />
    </div>
  );
}

export default function App() {
  return (
    <div className="relative flex h-[720px] w-[1280px] flex-col overflow-hidden bg-white font-['Open_Sans','Noto_Sans',sans-serif]">
      <BrowserChrome />
      <BrowserPage />
      <Taskbar />
      <InstallerWindow />
      <ExplorerWindow />
      <NotepadWindow />
      <Watermark />
    </div>
  );
}
